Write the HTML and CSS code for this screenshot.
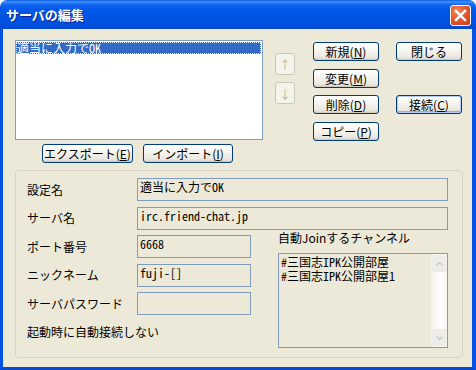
FILE: index.html
```html
<!DOCTYPE html>
<html lang="ja">
<head>
    <meta charset="UTF-8">
    <title>サーバの編集</title>
    <link rel="stylesheet" href="styles.css">
</head>
<body>
    <div class="window">
        <div class="titlebar">
            <span class="title">サーバの編集</span>
            <button class="close" aria-label="閉じる">
                <svg width="13" height="13" viewBox="0 0 13 13"><path d="M2 2 L11 11 M11 2 L2 11" stroke="#fff" stroke-width="2.4" stroke-linecap="square"/></svg>
            </button>
        </div>
        <div class="frame">
            <div class="top">
                <div class="list-col">
                    <div class="listbox">
                        <div class="item selected">適当に入力でOK</div>
                    </div>
                    <div class="io-buttons">
                        <button class="btn export">エクスポート(<u>E</u>)</button>
                        <button class="btn import">インポート(<u>I</u>)</button>
                    </div>
                </div>
                <div class="arrows">
                    <button class="btn arrow" disabled>↑</button>
                    <button class="btn arrow" disabled>↓</button>
                </div>
                <div class="actions">
                    <button class="btn">新規(<u>N</u>)</button>
                    <button class="btn">閉じる</button>
                    <button class="btn">変更(<u>M</u>)</button>
                    <span></span>
                    <button class="btn">削除(<u>D</u>)</button>
                    <button class="btn default">接続(<u>C</u>)</button>
                    <button class="btn">コピー(<u>P</u>)</button>
                </div>
            </div>

            <div class="group">
                <label class="label">設定名</label>
                <div class="field wide">適当に入力でOK</div>
                <label class="label">サーバ名</label>
                <div class="field wide">irc.friend-chat.jp</div>
                <label class="label">ポート番号</label>
                <div class="field">6668</div>
                <div class="channels">
                    <div class="channels-label">自動Joinするチャンネル</div>
                    <div class="channel-box">
                        <div class="channel-text">
                            <div>#三国志IPK公開部屋</div>
                            <div>#三国志IPK公開部屋1</div>
                        </div>
                        <div class="scrollbar">
                            <div class="sb-btn">
                                <svg width="7" height="4" viewBox="0 0 7 4"><path d="M0.5 3.5 L3.5 0.5 L6.5 3.5" fill="none" stroke="#c3cad6" stroke-width="1.4"/></svg>
                            </div>
                            <div class="sb-track"></div>
                            <div class="sb-btn">
                                <svg width="7" height="4" viewBox="0 0 7 4"><path d="M0.5 0.5 L3.5 3.5 L6.5 0.5" fill="none" stroke="#c3cad6" stroke-width="1.4"/></svg>
                            </div>
                        </div>
                    </div>
                </div>
                <label class="label">ニックネーム</label>
                <div class="field">fuji-[]</div>
                <label class="label">サーバパスワード</label>
                <div class="field"></div>
                <div class="label autoconnect">起動時に自動接続しない</div>
            </div>
        </div>
    </div>
</body>
</html>
```

FILE: styles.css
```css
body {
    margin: 0;
    font-family: "Noto Sans CJK JP", sans-serif;
    font-size: 12px;
    color: #000;
    background: #fff;
}
.window {
    width: 476px;
    height: 370px;
    display: flex;
    flex-direction: column;
}
.titlebar {
    height: 29px;
    flex: none;
    box-sizing: border-box;
    display: flex;
    justify-content: space-between;
    align-items: flex-start;
    padding: 0 5px 0 6px;
    border-radius: 7px 7px 0 0;
    background: linear-gradient(to bottom, #0b5fe2 0, #3f93fb 2px, #1a6af2 4px, #0059ea 9px, #0055e4 50%, #0052e0 80%, #0049d3 100%);
}
.title {
    margin-top: 7px;
    line-height: 16px;
    font-size: 13px;
    font-weight: bold;
    color: #fff;
    text-shadow: 1px 1px 0 #0c2290;
}
.close {
    margin-top: 5px;
    width: 21px;
    height: 21px;
    padding: 0;
    border: 1px solid #fff;
    border-radius: 3px;
    background: radial-gradient(circle at 35% 30%, #f08a66 0, #e0532c 55%, #c53c17 100%);
    display: flex;
    align-items: center;
    justify-content: center;
}
.frame {
    flex: 1;
    background: #ece9d8;
    border-left: 3px solid #0553e4;
    border-right: 4px solid #0553e4;
    border-bottom: 3px solid #0549d6;
    padding: 11px 0 0 12px;
}
.top {
    display: flex;
    align-items: flex-start;
}
.list-col {
    width: 248px;
}
.listbox {
    box-sizing: border-box;
    height: 100px;
    border: 1px solid #7f9db9;
    background: #fff;
    padding: 1px 1px 0 0;
}
.item, .field, .channel-text {
    font-family: "Noto Sans Mono CJK JP", "Noto Sans CJK JP", monospace;
}
.item {
    height: 12px;
    line-height: 12px;
    padding-left: 1px;
    box-sizing: border-box;
}
.item.selected {
    background: #316ac5;
    color: #fff;
    outline: 1px dotted #e8eefa;
    outline-offset: -1px;
}
.io-buttons {
    display: flex;
    gap: 10px;
    margin: 4px 0 0 27px;
}
.btn {
    box-sizing: border-box;
    height: 19px;
    padding: 0;
    font-family: "Noto Sans CJK JP", sans-serif;
    font-size: 12px;
    line-height: 17px;
    color: #000;
    border: 1px solid #003c74;
    border-radius: 3px;
    background: linear-gradient(to bottom, #ffffff 0, #f6f5f0 40%, #ebe9e1 80%, #d8d3c6 100%);
    box-shadow: inset 0 -1px 0 #d0cbbd;
}
.btn u {
    text-underline-offset: 1px;
}
.btn.default {
    box-shadow: inset 0 0 0 1px #b4cdf6, inset 0 -1px 0 1px #8eb0ea;
}
.export {
    width: 91px;
}
.import {
    width: 90px;
}
.arrows {
    display: flex;
    flex-direction: column;
    gap: 7px;
    margin: 13px 0 0 12px;
}
.btn.arrow {
    width: 20px;
    height: 22px;
    color: #b5b2a4;
    border-color: #cbc8bb;
    background: #f5f4ea;
    box-shadow: none;
}
.actions {
    display: grid;
    grid-template-columns: 66px 66px;
    grid-auto-rows: 19px;
    column-gap: 17px;
    row-gap: 7.5px;
    margin: 2px 0 0 18px;
}
.group {
    box-sizing: border-box;
    width: 448px;
    height: 188px;
    margin-top: 7px;
    padding: 7px 14px 0 11px;
    border: 1px solid #d6d3c4;
    border-radius: 4px;
    display: grid;
    grid-template-columns: 110px 114px 27px 170px;
    grid-template-rows: repeat(6, 23px);
    row-gap: 5.5px;
}
.label {
    grid-column: 1;
    align-self: center;
    line-height: 14px;
    white-space: nowrap;
}
.autoconnect {
    grid-column: 1 / 3;
}
.field {
    grid-column: 2;
    box-sizing: border-box;
    border: 1px solid #7f9db9;
    padding: 1px 2px;
    line-height: 14px;
    white-space: nowrap;
}
.field.wide {
    grid-column: 2 / 5;
}
.channels {
    grid-column: 4;
    grid-row: 3 / 7;
}
.channels-label {
    margin-top: -4px;
    line-height: 14px;
}
.channel-box {
    box-sizing: border-box;
    height: 95px;
    margin-top: 8px;
    border: 1px solid #7f9db9;
    display: flex;
}
.channel-text {
    flex: 1;
    padding: 1px 2px 0;
    line-height: 14px;
}
.scrollbar {
    width: 16px;
    display: flex;
    flex-direction: column;
    background: linear-gradient(to right, #f3f1ea, #fefefe 60%, #f4f3ee);
}
.sb-btn {
    box-sizing: border-box;
    height: 17px;
    margin: 1px 1px;
    border: 1px solid #e8ebf1;
    border-radius: 2px;
    background: #eeede5;
    display: flex;
    align-items: center;
    justify-content: center;
}
.sb-track {
    flex: 1;
}
```
